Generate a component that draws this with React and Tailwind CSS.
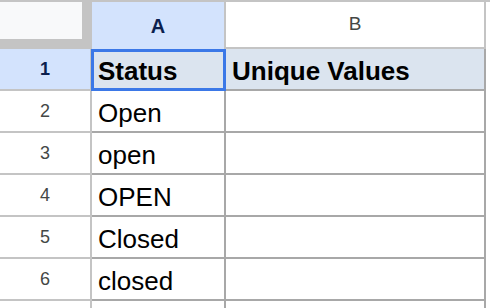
import React from 'react';

const rows = [
  { n: 2, a: 'Open' },
  { n: 3, a: 'open' },
  { n: 4, a: 'OPEN' },
  { n: 5, a: 'Closed' },
  { n: 6, a: 'closed' },
];

function App() {
  return (
    <div className="relative w-[490px] h-[308px] overflow-hidden bg-white font-['Liberation_Sans',Arial,sans-serif]">
      <div className="grid grid-cols-[92px_134px_260px_4px] border-t-2 border-[#c4c4c4]">
        {/* Column headers */}
        <div className="h-[47px] bg-[#c4c4c4]">
          <div className="w-[82px] h-[37px] bg-[#f8f9fa]" />
        </div>
        <div className="h-[47px] flex items-center justify-center bg-[#d3e3fd] border-r-2 border-[#c4c4c4] text-[20px] font-bold text-[#0b1f4e]">
          A
        </div>
        <div className="h-[47px] flex items-center justify-center border-r-2 border-b-2 border-[#c4c4c4] text-[19px] text-[#444746]">
          B
        </div>
        <div className="h-[47px]" />

        {/* Row 1 */}
        <div className="h-[42px] flex items-center justify-center bg-[#d3e3fd] border-r-2 border-b-2 border-[#c4c4c4] text-[18px] font-bold text-[#0b1f4e]">
          1
        </div>
        <div className="h-[42px] flex items-end pl-[6px] pb-[5px] bg-[#dbe4ef] border-r-2 border-b-2 border-[#a8a8a8] text-[26px] leading-none font-bold text-black">
          Status
        </div>
        <div className="h-[42px] flex items-end pl-[6px] pb-[5px] bg-[#dbe4ef] border-r-2 border-b-2 border-[#a8a8a8] text-[26px] leading-none font-bold text-black">
          Unique Values
        </div>
        <div className="h-[42px]" />

        {rows.map((r) => (
          <React.Fragment key={r.n}>
            <div className="h-[42px] flex items-center justify-center border-r-2 border-b-2 border-[#c4c4c4] text-[18px] text-[#444746]">
              {r.n}
            </div>
            <div className="h-[42px] flex items-end pl-[6px] pb-[5px] border-r-2 border-b-2 border-[#a8a8a8] text-[26px] leading-none text-black">
              {r.a}
            </div>
            <div className="h-[42px] border-r-2 border-b-2 border-[#a8a8a8]" />
            <div className="h-[42px]" />
          </React.Fragment>
        ))}

        {/* Row 7 (partly visible) */}
        <div className="h-[42px] border-r-2 border-[#c4c4c4]" />
        <div className="h-[42px] border-r-2 border-[#a8a8a8]" />
        <div className="h-[42px] border-r-2 border-[#a8a8a8]" />
        <div className="h-[42px]" />
      </div>

      {/* Selected cell A1 */}
      <div className="absolute left-[91px] top-[49px] w-[135px] h-[42px] border-[3px] border-[#3b78e7] pointer-events-none" />
    </div>
  );
}

export default App;
